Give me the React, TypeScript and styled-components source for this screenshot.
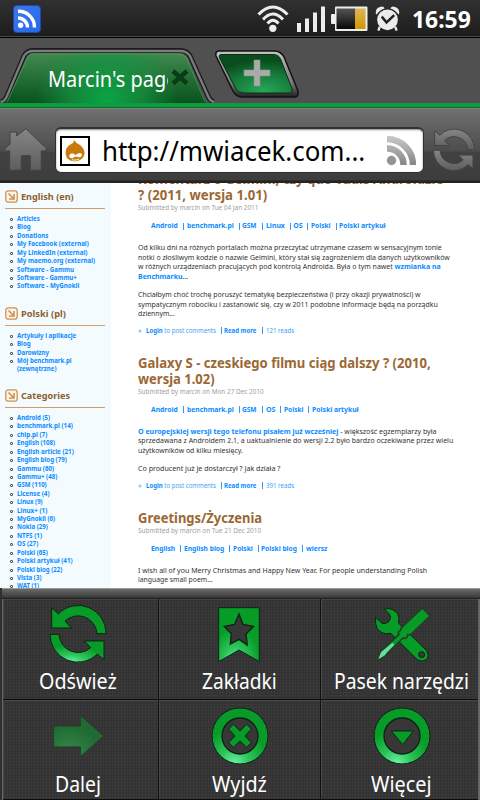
import React, { useLayoutEffect, useRef, useState } from "react";
import styled, { createGlobalStyle } from "styled-components";

const GlobalStyle = createGlobalStyle`
  * { box-sizing: border-box; }
  body { margin: 0; background: #000; font-family: "Noto Sans", "Open Sans", sans-serif; }
`;

const Screen = styled.div`
  width: 480px;
  height: 800px;
  overflow: hidden;
  display: flex;
  flex-direction: column;
`;

const FitBox = styled.span<{ $w: number }>`
  display: inline-block;
  flex: none;
  width: ${(p) => p.$w}px;
  white-space: nowrap;
  text-align: left;
`;
const FitInner = styled.span`
  display: inline-block;
  transform-origin: 0 50%;
`;

/* Condenses or widens a single line of text to a given width. */
function Fit({ w, children }: { w: number; children: React.ReactNode }) {
  const ref = useRef<HTMLSpanElement>(null);
  const [scale, setScale] = useState(1);
  useLayoutEffect(() => {
    if (ref.current) setScale(w / ref.current.offsetWidth);
  }, [w]);
  return (
    <FitBox $w={w}>
      <FitInner ref={ref} style={{ transform: `scaleX(${scale})` }}>{children}</FitInner>
    </FitBox>
  );
}

/* ---------- status bar ---------- */
const StatusBar = styled.header`
  flex: none;
  height: 38px;
  padding: 0 9px 0 13px;
  display: flex;
  align-items: center;
  justify-content: space-between;
  background: linear-gradient(#303130, #1c1d1c 94%, #484848 95%, #484848 97%, #000 97%);
`;
const StatusIcons = styled.div`
  display: flex;
  align-items: center;
  height: 38px;
`;
const Clock = styled.div`
  margin-left: 12px;
  font-size: 22.5px;
  line-height: 38px;
  height: 37px;
  font-weight: 700;
  color: #fff;
`;
const Gap = styled.span<{ $w: number }>`
  width: ${(p) => p.$w}px;
`;

/* ---------- tabs ---------- */
const TabStrip = styled.nav`
  flex: none;
  height: 65px;
  display: flex;
  background: #505050;
`;
const Tab = styled.div`
  display: grid;
  width: 215px;
  height: 65px;
  & > * { grid-area: 1 / 1; }
`;
const TabTitle = styled.div`
  margin: 24px 0 0 48px;
  width: 120px;
  height: 32px;
  line-height: 32px;
  font-size: 22px;
  color: #fff;
  overflow: hidden;
`;
const GreenLine = styled.div`
  flex: none;
  height: 6px;
  background: linear-gradient(#109a40 0 70%, #08702a 70% 85%, #78837c 85%);
`;

/* ---------- toolbar ---------- */
const Toolbar = styled.div`
  flex: none;
  height: 74px;
  display: flex;
  align-items: center;
  padding: 8px 4px 0;
  background: linear-gradient(#707070, #4c4c4c 57%, #424242 58%, #3d3d3d 96%, #242424 97%);
`;
const AddressBox = styled.div`
  width: 370px;
  height: 46px;
  margin: 0 8px 0 7px;
  display: flex;
  align-items: center;
  padding: 0 7px 0 4px;
  background: #fff;
  border: 1px solid #303030;
  border-top: 2px solid #303030;
  border-radius: 6px;
  box-shadow: inset 0 1px 2px #888;
`;
const Favicon = styled.div`
  width: 30px;
  height: 30px;
  border: 2px solid #000;
  display: flex;
  align-items: center;
  justify-content: center;
`;
const Url = styled.div`
  flex: 1;
  margin-left: 12px;
  font-size: 27px;
  line-height: 40px;
  color: #000;
`;

/* ---------- web page ---------- */
const WebPage = styled.main`
  flex: none;
  height: 405px;
  display: flex;
  overflow: hidden;
  background: #fff;
`;
const Sidebar = styled.aside`
  width: 111px;
  flex: none;
  padding: 6px 6px 0 5px;
  background: #f4fbff;
`;
const Block = styled.section<{ $h: number }>`
  height: ${(p) => p.$h}px;
`;
const BlockHead = styled.h2`
  margin: 0;
  height: 20px;
  padding-bottom: 4px;
  display: flex;
  align-items: center;
  gap: 3px;
  border-bottom: 1px solid #d29d68;
  font-size: 9.3px;
  line-height: 14px;
  color: #8c5f2c;
`;
const List = styled.ul`
  list-style: none;
  margin: 6px 0 0;
  padding: 0;
`;
const Item = styled.li<{ $tall?: boolean }>`
  height: ${(p) => (p.$tall ? 16 : 8.43)}px;
  display: flex;
  align-items: flex-start;
  font-size: 6.5px;
  line-height: 8.4px;
  font-weight: 700;
  color: #0a8cff;
`;
const Bullet = styled.i`
  width: 3px;
  height: 3px;
  margin: 3px 4px 0 5px;
  border: 1px solid #555;
  border-radius: 1px;
`;
const ItemText = styled.div`
  display: flex;
  flex-direction: column;
  line-height: 7.6px;
`;

const Articles = styled.div`
  padding-left: 27px;
`;
const Title = styled.h1<{ $up: number }>`
  margin: ${(p) => p.$up}px 0 0;
  font-size: 14px;
  line-height: 16px;
  color: #9b6833;
  display: flex;
  flex-direction: column;
`;
const Submitted = styled.div`
  height: 10px;
  line-height: 9px;
  font-size: 7px;
  color: #a0a0a0;
`;
const Tags = styled.div`
  display: flex;
  align-items: center;
  height: 10px;
  margin: 8px 0 0 13.4px;
  font-size: 7px;
  line-height: 10px;
  font-weight: 700;
  color: #0a8cff;
`;
const Divider = styled.i`
  width: 1px;
  height: 7px;
  margin: 0 2.7px 0 5px;
  background: #2e9cff;
`;
const Paragraph = styled.p<{ $top: number }>`
  margin: ${(p) => p.$top}px 0 0;
  display: flex;
  flex-direction: column;
  font-size: 7px;
  line-height: 9.5px;
  color: #333;
  b { color: #0a8cff; }
`;
const Links = styled.div`
  display: flex;
  align-items: center;
  height: 10px;
  margin-top: 7px;
  font-size: 7px;
  line-height: 10px;
  color: #3a9ff5;
  b { color: #0a8cff; }
`;
const Quote = styled.span`
  width: 7.5px;
`;

/* ---------- options menu ---------- */
const Menu = styled.footer`
  flex: none;
  height: 212px;
  border-left: 2px solid #303030;
  display: flex;
  flex-direction: column;
  background: radial-gradient(circle at 1px 1px, #2f2f2f 0.6px, transparent 1px) 0 0 / 3px 3px #393939;
`;
const MenuTop = styled.div`
  height: 11px;
  background: linear-gradient(#999 0 10%, #686868 12%, #3b3b3b 85%, #222 92%);
`;
const MenuGrid = styled.div`
  flex: 1;
  display: grid;
  grid-template-columns: 156px 162px 1fr;
  grid-template-rows: 101px 100px;
  border-left: 1px solid #666;
  border-right: 2px solid #666;
`;
const MenuCell = styled.button<{ $place?: "first" | "last" }>`
  border: 0;
  border-right: ${(p) => (p.$place === "last" ? "0" : "1px solid #111")};
  border-bottom: 1px solid #0c0c0c;
  box-shadow: inset 1px 1px #464646;
  background: transparent;
  padding: 4px ${(p) => (p.$place === "first" ? 5 : 0)}px 0 ${(p) => (p.$place === "last" ? 4 : 0)}px;
  display: flex;
  flex-direction: column;
  align-items: center;
  font: 21.5px/30px "Noto Sans", sans-serif;
  color: #fff;
`;
const IconSlot = styled.div`
  height: 62px;
  display: flex;
  align-items: center;
  justify-content: center;
`;
const MenuLabel = styled.div<{ $drop: number }>`
  margin-top: ${(p) => p.$drop}px;
`;

const CYCLE_TOP = "M154 66 L174 85 A83 83 0 0 1 317 144 L290 144 A57 57 0 0 0 194 106 L213 127 L154 127 Z";
const CYCLE_BOTTOM = "M149 146 L176 146 A57 57 0 0 0 271 186 L252 166 L311 166 L311 222 L291 205 A83 83 0 0 1 149 146 Z";

const DefsSvg = styled.svg`
  display: block;
  flex: none;
`;

function GreenDefs() {
  return (
    <DefsSvg width="0" height="0">
      <defs>
        <radialGradient id="glow" cx=".4" cy="1" r=".62">
          <stop offset="0" stopColor="#6cf5a6" />
          <stop offset=".45" stopColor="#2cc45a" />
          <stop offset="1" stopColor="#079c27" />
        </radialGradient>
        <radialGradient id="dim" cx=".3" cy=".85" r=".6">
          <stop offset="0" stopColor="#36854b" />
          <stop offset="1" stopColor="#1f6b31" />
        </radialGradient>
        <linearGradient id="grey" x1="0" y1="0" x2="0" y2="1">
          <stop offset="0" stopColor="#868686" />
          <stop offset="1" stopColor="#5d5d5d" />
        </linearGradient>
      </defs>
    </DefsSvg>
  );
}

function RefreshIcon() {
  return (
    <svg width="60" height="60" viewBox="143 55 180 180" fill="url(#glow)" stroke="#0c2412" strokeWidth="3">
      <path d={CYCLE_TOP} fill="#079c27" />
      <path d={CYCLE_BOTTOM} />
    </svg>
  );
}
function BookmarkIcon() {
  return (
    <svg width="60" height="60" viewBox="630 55 180 180" stroke="#0c2412" strokeWidth="3">
      <path d="M656 66 H778 V228 L717 193 L656 228 Z" fill="url(#glow)" />
      <path d="M717 85 L729 116 L761 122 L738 145 L742 178 L717 161 L691 175 L694 144 L673 122 L704 116 Z" fill="#373737" strokeWidth="4" />
    </svg>
  );
}
function ToolsIcon() {
  return (
    <svg width="60" height="60" viewBox="394 60 180 180" fill="#079c27" stroke="#0c2412" strokeWidth="3" strokeLinejoin="round">
      <path d="M431 75 Q458 70 472 91 Q476 101 474 118 L557 199 Q568 215 557 227 Q543 236 530 227 L450 148 Q425 154 410 134 Q402 119 405 100 L424 118 Q436 122 446 111 Q453 98 446 90 Z" />
      <circle cx="543" cy="212" r="9" fill="#373737" />
      <path d="M545 72 L568 96 L515 147 Q509 154 501 152 Q500 166 487 162 L441 207 L435 216 L411 229 L419 204 L430 194 L475 151 Q469 143 480 139 Q480 130 488 126 Z" stroke="#263c29" strokeWidth="5" />
      <path d="M455 176 L461 182 L438 206 L432 214 L413 226 L421 205 Z" fill="#68dda0" stroke="none" />
    </svg>
  );
}
function ForwardIcon() {
  return (
    <svg width="60" height="60" viewBox="143 360 180 180">
      <path d="M160 423 H240 V391 L310 453 L240 515 V486 H160 Z" fill="url(#dim)" stroke="#263b2c" strokeWidth="3" />
    </svg>
  );
}
function RingIcon({ kind }: { kind: "close" | "more" }) {
  return (
    <svg width="60" height="60" viewBox="-90 -93 180 180" stroke="#0c2412" strokeWidth="3">
      <circle r="84" fill="url(#glow)" />
      <circle r="54" fill="#373737" strokeWidth="4" />
      {kind === "close" ? (
        <path d="M-20 -35 L0 -15 L20 -35 L34 -21 L15 0 L34 20 L20 34 L0 15 L-20 34 L-34 20 L-15 0 L-34 -21 Z" fill="#079c27" />
      ) : (
        <path d="M-32 -15 H34 L2 26 Z" fill="#079c27" />
      )}
    </svg>
  );
}

function BlueFeed() {
  return (
    <svg width="28" height="28" viewBox="0 0 28 28">
      <defs>
        <linearGradient id="blue" x1="0" y1="0" x2="1" y2="1">
          <stop offset="0" stopColor="#3d78e8" />
          <stop offset="1" stopColor="#2568f0" />
        </linearGradient>
      </defs>
      <rect x=".5" y=".5" width="27" height="27" rx="3.5" fill="url(#blue)" stroke="#1f4aa8" />
      <g fill="none" stroke="#fff" strokeWidth="3.4">
        <path d="M5 6.3 A16 16 0 0 1 21.5 22.5" />
        <path d="M5 13 A9.5 9.5 0 0 1 14.5 22.5" />
      </g>
      <circle cx="7.6" cy="20.3" r="2.7" fill="#fff" />
    </svg>
  );
}
function WifiIcon() {
  return (
    <svg width="32" height="28" viewBox="0 0 32 28" fill="none" stroke="#ededed" strokeWidth="3">
      <path d="M1.5 9.5 Q15.8 -5.5 30.5 9.5" />
      <path d="M6 14.5 Q15.8 3.5 26 14.5" />
      <path d="M10.5 18.5 Q15.8 12 21.5 18.5" />
      <circle cx="15.8" cy="23.3" r="3.6" fill="#ededed" stroke="none" />
    </svg>
  );
}
function SignalIcon() {
  return (
    <svg width="30" height="26" viewBox="0 0 30 26" fill="#ececec">
      <path d="M1 17h4v9H1zM9 12.500h4V26H9zM17 6.500h4V26h-4zM25 .5h4V26h-4z" />
    </svg>
  );
}
function BatteryIcon() {
  return (
    <svg width="37" height="26" viewBox="0 0 37 26">
      <defs>
        <linearGradient id="cell" x1="0" y1="0" x2="0" y2="1">
          <stop offset="0" stopColor="#555" />
          <stop offset="1" stopColor="#080808" />
        </linearGradient>
        <linearGradient id="charge" x1="0" y1="0" x2="0" y2="1">
          <stop offset="0" stopColor="#deb458" />
          <stop offset="1" stopColor="#d39700" />
        </linearGradient>
      </defs>
      <path d="M1 8 H4 V1.500 Q4 .5 5 .5 H35.500 Q36.500 .5 36.500 1.500 V24 Q36.500 25 35.500 25 H5 Q4 25 4 24 V18 H1 Q0 18 0 17 V9 Q0 8 1 8Z" fill="#eee" />
      <rect x="5.500" y="2.500" width="19" height="20.500" fill="url(#cell)" />
      <rect x="24" y="2.500" width="10.500" height="20.500" fill="url(#charge)" />
    </svg>
  );
}
function AlarmIcon() {
  return (
    <svg width="25" height="28" viewBox="0 0 26 28" fill="#ebebeb">
      <path d="M1 9 Q0 3 5 1.500 Q9 0 10 3 Q4 5 2 9Z M25 9 Q26 3 21 1.500 Q17 0 16 3 Q22 5 24 9Z" />
      <circle cx="13" cy="14.800" r="10.800" />
      <path d="M5 22 L3.500 26 M21 22 L22.500 26" stroke="#ebebeb" strokeWidth="2.400" />
      <path d="M7 11.500 L12 17.500 L20 10" fill="none" stroke="#222" strokeWidth="2.600" />
    </svg>
  );
}

function TabShape() {
  return (
    <svg width="215" height="65" viewBox="0 38 215 65">
      <defs>
        <linearGradient id="tabBase" x1="0" y1="0" x2="0" y2="1">
          <stop offset="0" stopColor="#42894f" />
          <stop offset="1" stopColor="#07521d" />
        </linearGradient>
        <radialGradient id="tabGlow" gradientUnits="userSpaceOnUse" cx="107" cy="101" r="72" gradientTransform="translate(0 -8) scale(1 1.08)">
          <stop offset="0" stopColor="#0aa645" />
          <stop offset=".5" stopColor="#159241" stopOpacity=".75" />
          <stop offset="1" stopColor="#159241" stopOpacity="0" />
        </radialGradient>
      </defs>
      <path d="M1 102 Q5 101 7 96 L24 56 Q27 50.500 33 50.500 H180 Q187 50.500 190 56 L208 96 Q210 101 214 102" fill="none" stroke="#1b1b1b" strokeWidth="5" />
      <path d="M1 102 Q5 101 7 96 L24 56 Q27 51 33 51 H180 Q187 51 190 56 L208 96 Q210 101 214 102" fill="none" stroke="#7c7c7c" strokeWidth="2.400" />
      <path d="M6 103 L26 59 Q28 53.500 34 53.500 H179 Q185 53.500 188 59 L206 103 Z" fill="url(#tabBase)" />
      <path d="M6 103 L26 59 Q28 53.500 34 53.500 H179 Q185 53.500 188 59 L206 103 Z" fill="url(#tabGlow)" />
      <path d="M7 102 L27 59 Q29 54 34 54 H179 Q184 54 187 59 L205 102" fill="none" stroke="#58a067" strokeOpacity=".6" />
    </svg>
  );
}
function TabClose() {
  return (
    <svg width="215" height="65" viewBox="0 38 215 65">
      <path d="M173 71 L187 83.500 M187 71 L173 83.500" stroke="#083d15" strokeWidth="4.600" />
    </svg>
  );
}
function NewTab() {
  return (
    <svg width="86" height="65" viewBox="215 38 86 65">
      <defs>
        <radialGradient id="newGlow" cx=".6" cy=".95" r=".8">
          <stop offset="0" stopColor="#27a957" />
          <stop offset=".6" stopColor="#15783a" />
          <stop offset="1" stopColor="#0a4d1c" />
        </radialGradient>
        <linearGradient id="metal" x1="0" y1="0" x2="0" y2="1">
          <stop offset="0" stopColor="#c4c4c4" />
          <stop offset=".7" stopColor="#777" />
          <stop offset="1" stopColor="#222" />
        </linearGradient>
      </defs>
      <path d="M219 51 H274 Q281 51 284 57 L298 91 Q299 97 294 97 H242 Q236 97 233 91 L216 56 Q215 51 219 51 Z" fill="url(#metal)" stroke="#111" strokeWidth="1.500" />
      <path d="M221 54.500 H273 Q279 54.500 281 60 L292 89 Q293 93 290 93 H244 Q238 93 236 89 L220 59 Q218 55 221 54.500 Z" fill="url(#newGlow)" stroke="#0a2f14" />
      <path d="M254 60 h6 v10 h10 v6 h-10 v10 h-6 v-10 h-10 v-6 h10 Z" fill="#aaa" stroke="#84988a" strokeWidth=".6" />
    </svg>
  );
}
function HomeIcon() {
  return (
    <svg width="44" height="44" viewBox="12 84 132 132">
      <path d="M14 148 L30 132 V96 H50 V108 L78 86 L142 148 L132 153 H124 V211 H91 V167 H64 V211 H29 V153 H18 Z" fill="url(#grey)" stroke="#424242" strokeWidth="3" strokeLinejoin="round" />
    </svg>
  );
}
function ReloadIcon() {
  return (
    <svg width="44" height="44" viewBox="143 55 180 180" fill="url(#grey)" stroke="#444" strokeWidth="4">
      <path d={CYCLE_TOP} />
      <path d={CYCLE_BOTTOM} />
    </svg>
  );
}
function GreyFeed() {
  return (
    <svg width="30" height="31" viewBox="0 0 30 31">
      <defs>
        <linearGradient id="feed" gradientUnits="userSpaceOnUse" x1="0" y1="0" x2="0" y2="30">
          <stop offset="0" stopColor="#ccc" />
          <stop offset="1" stopColor="#858585" />
        </linearGradient>
      </defs>
      <g fill="none" stroke="url(#feed)" strokeWidth="6.500">
        <path d="M1 4 A26 26 0 0 1 27 30" />
        <path d="M1 13.500 A16 16 0 0 1 17.500 30" />
      </g>
      <circle cx="5.500" cy="25.500" r="4.700" fill="#949494" />
    </svg>
  );
}
function DrupalIcon() {
  return (
    <svg width="22" height="24" viewBox="0 0 22 24">
      <path d="M10 1 Q12 4 16 6 Q21 10 20.500 15 Q19 22 11 22.500 Q2 22 1.500 14 Q1.500 8 7 5 Q10 4 10 1Z" fill="#c87a0c" />
      <path d="M5 17 Q7 12 11.500 16 Q17 12 18 16 Q17 19 14 18 Q11 16.500 9 19 Q6 20 5 17Z" fill="#fff" />
      <path d="M8 20.500 Q11 22 15 20" fill="none" stroke="#f8e3c0" strokeWidth="1.200" />
    </svg>
  );
}
function HeadIcon() {
  return (
    <svg width="13" height="13" viewBox="0 0 13 13" fill="none" stroke="#cf9256">
      <rect x=".8" y=".8" width="11.400" height="11.400" rx="2.500" strokeWidth="1.300" fill="#fff3e6" />
      <path d="M3.500 3.500 L8.500 8.500 M9 4 V9 H4" strokeWidth="1.600" />
    </svg>
  );
}

type Row = [string, number];
const english: Row[] = [
  ["Articles", 23], ["Blog", 13.3], ["Donations", 31], ["My Facebook (external)", 72],
  ["My LinkedIn (external)", 70], ["My maemo.org (external)", 78], ["Software - Gammu", 57],
  ["Software - Gammu+", 60], ["Software - MyGnokii", 62],
];
const polish: Row[] = [["Artykuły i aplikacje", 59], ["Blog", 13.3], ["Darowizny", 32]];
const categories: Row[] = [
  ["Android (5)", 33.5], ["benchmark.pl (14)", 55.5], ["chip.pl (7)", 30], ["English (108)", 38.5],
  ["English article (21)", 56.5], ["English blog (79)", 50], ["Gammu (60)", 37], ["Gammu+ (48)", 40.5],
  ["GSM (110)", 30], ["License (4)", 32.5], ["Linux (9)", 26], ["Linux+ (1)", 30], ["MyGnokii (6)", 38.5],
  ["Nokia (29)", 31], ["NTFS (1)", 25], ["OS (27)", 21], ["Polski (65)", 31], ["Polski artykuł (41)", 55.5],
  ["Polski blog (22)", 45.5], ["Vista (3)", 24.5], ["WAT (1)", 22.5],
];

function SideBlock({ title, w, h, rows, children }: { title: string; w: number; h: number; rows: Row[]; children?: React.ReactNode }) {
  return (
    <Block $h={h}>
      <BlockHead><HeadIcon /><Fit w={w}>{title}</Fit></BlockHead>
      <List>
        {rows.map(([t, tw]) => (
          <Item key={t}><Bullet /><Fit w={tw}>{t}</Fit></Item>
        ))}
        {children}
      </List>
    </Block>
  );
}
function TagRow({ tags }: { tags: Row[] }) {
  return (
    <Tags>
      {tags.map(([t, w], i) => (
        <React.Fragment key={t}>{i > 0 && <Divider />}<Fit w={w}>{t}</Fit></React.Fragment>
      ))}
    </Tags>
  );
}
function PostLinks({ reads }: { reads: string }) {
  return (
    <Links>
      <Quote>»</Quote>
      <Fit w={70}><b>Login</b> to post comments</Fit><Divider />
      <Fit w={32.700}><b>Read more</b></Fit><Divider />
      <Fit w={28}>{reads}</Fit>
    </Links>
  );
}

export default function App() {
  return (
    <Screen>
      <GlobalStyle />
      <GreenDefs />
      <StatusBar>
        <BlueFeed />
        <StatusIcons>
          <WifiIcon />
          <Gap $w={7} />
          <SignalIcon />
          <Gap $w={5} />
          <BatteryIcon />
          <Gap $w={7} />
          <AlarmIcon />
          <Clock><Fit w={59}>16:59</Fit></Clock>
        </StatusIcons>
      </StatusBar>
      <TabStrip>
        <Tab>
          <TabShape />
          <TabTitle><Fit w={129.5}>Marcin's page</Fit></TabTitle>
          <TabClose />
        </Tab>
        <NewTab />
      </TabStrip>
      <GreenLine />
      <Toolbar>
        <HomeIcon />
        <AddressBox>
          <Favicon><DrupalIcon /></Favicon>
          <Url><Fit w={263.5}>http://mwiacek.com...</Fit></Url>
          <GreyFeed />
        </AddressBox>
        <ReloadIcon />
      </Toolbar>
      <WebPage>
        <Sidebar>
          <SideBlock title="English (en)" w={53} h={117} rows={english} />
          <SideBlock title="Polski (pl)" w={45} h={82} rows={polish}>
            <Item $tall>
              <Bullet />
              <ItemText><Fit w={55}>Mój benchmark.pl</Fit><Fit w={39.5}>(zewnętrzne)</Fit></ItemText>
            </Item>
          </SideBlock>
          <SideBlock title="Categories" w={49} h={220} rows={categories} />
        </Sidebar>
        <Articles>
          <Title $up={-12}>
            <Fit w={305}>Komentarz o Geimini, czy quo vadis Androidzie</Fit>
            <Fit w={129}>? (2011, wersja 1.01)</Fit>
          </Title>
          <Submitted><Fit w={120.5}>Submitted by marcin on Tue 04 Jan 2011</Fit></Submitted>
          <TagRow tags={[["Android", 27], ["benchmark.pl", 46.5], ["GSM", 15], ["Linux", 18.7], ["OS", 9], ["Polski", 19.7], ["Polski artykuł", 46.7]]} />
          <Paragraph $top={12}>
            <Fit w={304}>Od kilku dni na różnych portalach można przeczytać utrzymane czasem w sensacyjnym tonie</Fit>
            <Fit w={311.5}>notki o złośliwym kodzie o nazwie Geimini, który stał się zagrożeniem dla danych użytkowników</Fit>
            <Fit w={303}>w różnych urządzeniach pracujących pod kontrolą Androida. Była o tym nawet <b>wzmianka na</b></Fit>
            <Fit w={50}><b>Benchmarku</b>...</Fit>
          </Paragraph>
          <Paragraph $top={9}>
            <Fit w={283}>Chciałbym choć trochę poruszyć tematykę bezpieczeństwa (i przy okazji prywatności) w</Fit>
            <Fit w={300}>sympatycznym robociku i zastanowić się, czy w 2011 podobne informacje będą na porządku</Fit>
            <Fit w={37}>dziennym...</Fit>
          </Paragraph>
          <PostLinks reads="121 reads" />

          <Title $up={19}>
            <Fit w={293}>Galaxy S - czeskiego filmu ciąg dalszy ? (2010,</Fit>
            <Fit w={77}>wersja 1.02)</Fit>
          </Title>
          <Submitted><Fit w={125.5}>Submitted by marcin on Mon 27 Dec 2010</Fit></Submitted>
          <TagRow tags={[["Android", 27], ["benchmark.pl", 46.5], ["GSM", 15], ["OS", 9], ["Polski", 19.7], ["Polski artykuł", 46.7]]} />
          <Paragraph $top={12}>
            <Fit w={298}><b>O europejskiej wersji tego telefonu pisałem już wcześniej</b> - większość egzemplarzy była</Fit>
            <Fit w={315}>sprzedawana z Androidem 2.1, a uaktualnienie do wersji 2.2 było bardzo oczekiwane przez wielu</Fit>
            <Fit w={105}>użytkowników od kilku miesięcy.</Fit>
          </Paragraph>
          <Paragraph $top={9}>
            <Fit w={142}>Co producent już je dostarczył ? Jak działa ?</Fit>
          </Paragraph>
          <PostLinks reads="391 reads" />

          <Title $up={19}>
            <Fit w={124}>Greetings/Życzenia</Fit>
          </Title>
          <Submitted><Fit w={123}>Submitted by marcin on Tue 21 Dec 2010</Fit></Submitted>
          <TagRow tags={[["English", 24], ["English blog", 40], ["Polski", 20], ["Polski blog", 36], ["wiersz", 21]]} />
          <Paragraph $top={12}>
            <Fit w={289}>I wish all of you Merry Christmas and Happy New Year. For people understanding Polish</Fit>
            <Fit w={75}>language small poem...</Fit>
          </Paragraph>
        </Articles>
      </WebPage>
      <Menu>
        <MenuTop />
        <MenuGrid>
          <MenuCell $place="first"><IconSlot><RefreshIcon /></IconSlot><MenuLabel $drop={1}><Fit w={78}>Odśwież</Fit></MenuLabel></MenuCell>
          <MenuCell><IconSlot><BookmarkIcon /></IconSlot><MenuLabel $drop={1}><Fit w={75}>Zakładki</Fit></MenuLabel></MenuCell>
          <MenuCell $place="last"><IconSlot><ToolsIcon /></IconSlot><MenuLabel $drop={1}><Fit w={135}>Pasek narzędzi</Fit></MenuLabel></MenuCell>
          <MenuCell $place="first"><IconSlot><ForwardIcon /></IconSlot><MenuLabel $drop={3}><Fit w={46}>Dalej</Fit></MenuLabel></MenuCell>
          <MenuCell><IconSlot><RingIcon kind="close" /></IconSlot><MenuLabel $drop={3}><Fit w={55}>Wyjdź</Fit></MenuLabel></MenuCell>
          <MenuCell $place="last"><IconSlot><RingIcon kind="more" /></IconSlot><MenuLabel $drop={3}><Fit w={61}>Więcej</Fit></MenuLabel></MenuCell>
        </MenuGrid>
      </Menu>
    </Screen>
  );
}
